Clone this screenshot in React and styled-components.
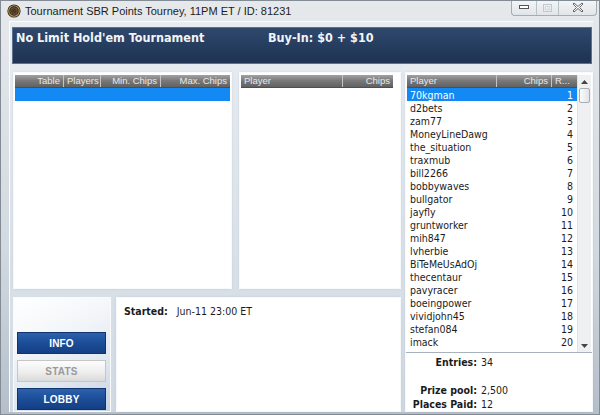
import styled, { createGlobalStyle } from "styled-components";

const GlobalStyle = createGlobalStyle`
  * { box-sizing: border-box; }
  html, body { margin: 0; padding: 0; background: #fff; }
  body { font-family: "DejaVu Sans Condensed", "Liberation Sans", sans-serif; }
`;

const players = [
  "70kgman", "d2bets", "zam77", "MoneyLineDawg", "the_situation",
  "traxmub", "bill2266", "bobbywaves", "bullgator", "jayfly",
  "gruntworker", "mih847", "lvherbie", "BiTeMeUsAdOj", "thecentaur",
  "pavyracer", "boeingpower", "vividjohn45", "stefan084", "imack",
];

const App = () => {
  return (
    <>
      <GlobalStyle />
      <Window>
        <TitleBar>
          <ChipIcon />
          <TitleText>Tournament SBR Points Tourney, 11PM ET / ID: 81231</TitleText>
          <WindowButtons>
            <WinButton $w={24}>
              <svg width="10" height="5" viewBox="0 0 10 5">
                <rect x="0.5" y="0.5" width="9" height="3" fill="#fff" stroke="#555" />
              </svg>
            </WinButton>
            <WinButton $w={22}>
              <svg width="9" height="8" viewBox="0 0 9 8">
                <rect x="0.5" y="0.5" width="8" height="7" fill="none" stroke="#c3c8cd" />
                <rect x="2.5" y="2.5" width="4" height="3" fill="none" stroke="#d4d8dc" />
              </svg>
            </WinButton>
            <WinButton $w={38}>
              <svg width="12" height="11" viewBox="0 0 12 11">
                <path d="M2 1 L6 4.5 L10 1 L11 2 L7.5 5.5 L11 9 L10 10 L6 6.5 L2 10 L1 9 L4.5 5.5 L1 2 Z"
                  fill="#fff" stroke="#555" strokeWidth="0.9" strokeLinejoin="round" />
              </svg>
            </WinButton>
          </WindowButtons>
        </TitleBar>

        <Client>
          <HeaderBar>
            <HeaderTitle>No Limit Hold'em Tournament</HeaderTitle>
            <HeaderTitle>Buy-In: $0 + $10</HeaderTitle>
          </HeaderBar>

          <Main>
            <LeftCol>
              <TopRow>
                <Panel $w={217} $pr={1}>
                  <GridHeader>
                    <HeaderCell $w={49} $align="right">Table</HeaderCell>
                    <HeaderCell $w={37} $align="right">Players</HeaderCell>
                    <HeaderCell $w={60} $align="right">Min. Chips</HeaderCell>
                    <HeaderCell $align="right" $last>Max. Chips</HeaderCell>
                  </GridHeader>
                  <Row $selected />
                </Panel>
                <Panel $w={160} $pr={7}>
                  <GridHeader>
                    <HeaderCell $w={102}>Player</HeaderCell>
                    <HeaderCell $align="right" $last>Chips</HeaderCell>
                  </GridHeader>
                </Panel>
              </TopRow>

              <BottomRow>
                <ButtonsPanel>
                  <NavButton>INFO</NavButton>
                  <NavButton $light>STATS</NavButton>
                  <NavButton>LOBBY</NavButton>
                </ButtonsPanel>
                <InfoPanel>
                  <Bold>Started:</Bold>
                  <InfoValue>Jun-11 23:00 ET</InfoValue>
                </InfoPanel>
              </BottomRow>
            </LeftCol>

            <RightCol>
              <ListPanel>
                <ListBody>
                  <GridHeader>
                    <HeaderCell $w={90}>Player</HeaderCell>
                    <HeaderCell $w={55} $align="right">Chips</HeaderCell>
                    <HeaderCell $align="left" $last>R...</HeaderCell>
                  </GridHeader>
                  {players.map((name, i) => (
                    <Row key={name} $selected={i === 0}>
                      <span>{name}</span>
                      <span>{i + 1}</span>
                    </Row>
                  ))}
                </ListBody>
                <Scrollbar>
                  <ScrollArrow>
                    <svg width="7" height="4" viewBox="0 0 7 4"><path d="M0 4 L3.5 0 L7 4 Z" fill="#444" /></svg>
                  </ScrollArrow>
                  <Thumb />
                  <ScrollTrack />
                  <ScrollArrow>
                    <svg width="7" height="4" viewBox="0 0 7 4"><path d="M0 0 L3.5 4 L7 0 Z" fill="#444" /></svg>
                  </ScrollArrow>
                </Scrollbar>
              </ListPanel>
              <StatsPanel>
                <StatRow><StatLabel>Entries:</StatLabel><StatValue>34</StatValue></StatRow>
                <StatRow />
                <StatRow><StatLabel>Prize pool:</StatLabel><StatValue>2,500</StatValue></StatRow>
                <StatRow><StatLabel>Places Paid:</StatLabel><StatValue>12</StatValue></StatRow>
              </StatsPanel>
            </RightCol>
          </Main>
        </Client>
      </Window>
    </>
  );
};

export default App;

const ChipIcon = () => (
  <svg width="14" height="14" viewBox="0 0 14 14">
    <circle cx="7" cy="7" r="6.6" fill="#2b2118" />
    <circle cx="7" cy="7" r="5.3" fill="none" stroke="#b8965a" strokeWidth="1.1" />
    <circle cx="7" cy="7" r="3.4" fill="#4a3a26" stroke="#8f7445" strokeWidth="0.6" />
  </svg>
);

const Window = styled.div`
  width: 600px;
  height: 415px;
  display: flex;
  flex-direction: column;
  background: linear-gradient(180deg, #e6e9ec 0%, #d2d9e0 60%, #b4bfca 100%);
  border: 1px solid #838c95;
  overflow: hidden;
`;

const TitleBar = styled.div`
  height: 20px;
  flex: none;
  display: flex;
  align-items: center;
  padding: 0 2px 0 6px;
`;

const TitleText = styled.span`
  margin-left: 4px;
  font-family: "Liberation Sans", sans-serif;
  font-size: 11px;
  color: #1c1c1c;
`;

const WindowButtons = styled.div`
  margin-left: auto;
  align-self: flex-start;
  display: flex;
  height: 16px;
  margin-top: -1px;
  border: 1px solid #a4adb6;
  border-top: none;
  border-radius: 0 0 4px 4px;
  background: linear-gradient(180deg, #f4f6f8, #e1e5e9);
  overflow: hidden;
`;

const WinButton = styled.div`
  width: ${(p) => p.$w}px;
  display: flex;
  align-items: center;
  justify-content: center;
  & + & { border-left: 1px solid #b8c0c8; }
`;

const Client = styled.div`
  flex: 1;
  display: flex;
  flex-direction: column;
  margin: 0 6px 4px 8px;
  padding: 5px 1px 1px 2px;
  border-top: 1px solid #fbfcfd;
  border-left: 1px solid #fbfcfd;
  background: linear-gradient(180deg, #e8edf2 0%, #dce3ea 50%, #d0d9e3 100%);
`;

const HeaderBar = styled.div`
  height: 37px;
  flex: none;
  display: flex;
  align-items: flex-start;
  padding: 2px 3px;
  background: linear-gradient(180deg, #2f486c 0%, #243b5c 60%, #1f3352 100%);
  border: 1px solid #5a7290;
  margin-bottom: 9px;
`;

const HeaderTitle = styled.div`
  font-family: "DejaVu Sans Condensed", "Liberation Sans", sans-serif;
  font-weight: bold;
  font-size: 12.5px;
  line-height: 15px;
  color: #f2f4f7;
  &:first-child { width: 252px; }
`;

const Main = styled.div`
  flex: 1;
  display: flex;
  gap: 6px;
  padding-left: 2px;
`;

const LeftCol = styled.div`
  width: 386px;
  display: flex;
  flex-direction: column;
  gap: 10px;
`;

const TopRow = styled.div`
  height: 215px;
  display: flex;
  gap: 9px;
`;

const BottomRow = styled.div`
  flex: 1;
  display: flex;
  gap: 7px;
`;

const Panel = styled.div`
  width: ${(p) => p.$w}px;
  background: #fff;
  padding: 2px ${(p) => p.$pr}px 2px 1px;
  box-shadow: 0 0 0 1px rgba(255, 255, 255, 0.85), 0 0 3px rgba(110, 130, 155, 0.35);
`;

const GridHeader = styled.div`
  display: flex;
  height: 13px;
  background: linear-gradient(180deg, #a2a2a2 0%, #7a7a7a 45%, #616161 100%);
  border-bottom: 1px solid #4e4e4e;
`;

const HeaderCell = styled.div`
  ${(p) => (p.$w ? `width: ${p.$w}px; flex: none;` : "flex: 1;")}
  text-align: ${(p) => p.$align || "left"};
  font-family: "Liberation Sans", sans-serif;
  font-size: 9.5px;
  line-height: 12px;
  color: #e8e8e8;
  padding: 0 3px;
  white-space: nowrap;
  overflow: hidden;
  border-right: ${(p) => (p.$last ? "none" : "1px solid #c4c4c4")};
`;

const Row = styled.div`
  height: 13px;
  display: flex;
  justify-content: space-between;
  align-items: center;
  padding: 0 4px 0 3px;
  font-size: 10.5px;
  color: ${(p) => (p.$selected ? "#fff" : "#1b1b1b")};
  background: ${(p) => (p.$selected ? "#1389f4" : "transparent")};
`;

const ButtonsPanel = styled.div`
  width: 96px;
  display: flex;
  flex-direction: column;
  gap: 6px;
  padding: 34px 4px 0 3px;
  background: linear-gradient(155deg, #ffffff 0%, #f3f6f9 35%, #dde5ee 70%, #c7d3e0 100%);
  box-shadow: 0 0 0 1px rgba(255, 255, 255, 0.85);
`;

const NavButton = styled.div`
  height: 22px;
  display: flex;
  align-items: center;
  justify-content: center;
  font-family: "Liberation Sans", sans-serif;
  font-weight: bold;
  font-size: 10px;
  letter-spacing: 0.2px;
  color: ${(p) => (p.$light ? "#9a9a9a" : "#ffffff")};
  background: ${(p) =>
    p.$light
      ? "linear-gradient(180deg, #fdfdfd 0%, #eeeeee 55%, #dadada 100%)"
      : "linear-gradient(180deg, #2d61ad 0%, #1c4d98 50%, #143f84 100%)"};
  border: 1px solid ${(p) => (p.$light ? "#c6c6c6" : "#0f3470")};
`;

const InfoPanel = styled.div`
  width: 283px;
  display: flex;
  align-items: flex-start;
  padding: 6px 7px;
  background: #fff;
  font-size: 10.5px;
  line-height: 14px;
  color: #1b1b1b;
  box-shadow: 0 0 0 1px rgba(255, 255, 255, 0.85), 0 0 3px rgba(110, 130, 155, 0.35);
`;

const Bold = styled.span`
  font-weight: bold;
`;

const InfoValue = styled.span`
  margin-left: 9px;
`;

const RightCol = styled.div`
  width: 186px;
  display: flex;
  flex-direction: column;
  background: #fff;
  box-shadow: 0 0 0 1px rgba(255, 255, 255, 0.85), 0 0 3px rgba(110, 130, 155, 0.35);
`;

const ListPanel = styled.div`
  height: 279px;
  display: flex;
  padding: 2px 1px 0 1px;
`;

const ListBody = styled.div`
  flex: 1;
`;

const Scrollbar = styled.div`
  width: 14px;
  display: flex;
  flex-direction: column;
  background: #eef0f2;
  border-left: 1px solid #e0e3e6;
`;

const ScrollArrow = styled.div`
  height: 13px;
  display: flex;
  align-items: center;
  justify-content: center;
`;

const Thumb = styled.div`
  height: 15px;
  margin: 0 1px;
  border: 1px solid #a9aeb3;
  border-radius: 2px;
  background: linear-gradient(90deg, #fbfbfb, #e2e4e6);
`;

const ScrollTrack = styled.div`
  flex: 1;
`;

const StatsPanel = styled.div`
  flex: 1;
  border-top: 1px solid #a8b2bc;
  padding-top: 2px;
`;

const StatRow = styled.div`
  display: flex;
  height: 14px;
  line-height: 14px;
  font-size: 10.5px;
  color: #1b1b1b;
`;

const StatLabel = styled.span`
  width: 71px;
  text-align: right;
  font-weight: bold;
  white-space: nowrap;
`;

const StatValue = styled.span`
  margin-left: 4px;
`;
